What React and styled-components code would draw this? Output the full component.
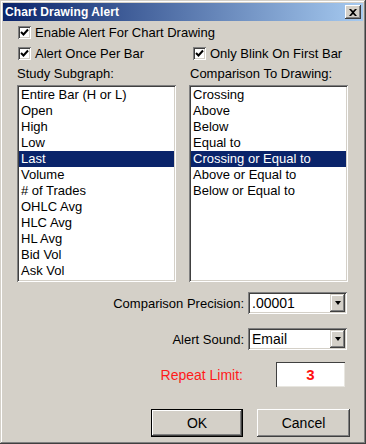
import React from 'react';
import styled, { createGlobalStyle } from 'styled-components';

const GlobalStyle = createGlobalStyle`
  html, body {
    margin: 0;
    padding: 0;
    background: #d4d0c8;
  }
  body {
    font-family: "Liberation Sans", Arial, sans-serif;
    font-size: 13px;
    color: #000;
  }
`;

const sunken = `
  box-shadow: inset 1px 1px #808080, inset -1px -1px #ffffff,
    inset 2px 2px #404040, inset -2px -2px #d4d0c8;
`;

const Window = styled.div`
  width: 366px;
  height: 444px;
  box-sizing: border-box;
  padding: 3px;
  background: #d4d0c8;
  box-shadow: inset -1px -1px #404040, inset 1px 1px #d4d0c8,
    inset -2px -2px #808080, inset 2px 2px #ffffff;
  display: flex;
  flex-direction: column;
`;

const TitleBar = styled.div`
  height: 18px;
  display: flex;
  align-items: center;
  justify-content: space-between;
  padding: 0 2px 0 2px;
  background: linear-gradient(to right, #0a246a, #a6caf0);
`;

const Title = styled.span`
  color: #fff;
  font-weight: bold;
  font-size: 12px;
  letter-spacing: 0.1px;
`;

const CloseButton = styled.div`
  width: 16px;
  height: 14px;
  background: #d4d0c8;
  box-shadow: inset -1px -1px #404040, inset 1px 1px #ffffff,
    inset -2px -2px #808080;
  display: flex;
  align-items: center;
  justify-content: center;
`;

const Body = styled.div`
  flex: 1;
  display: flex;
  flex-direction: column;
  padding: 5px 15px 0 14px;
`;

const CheckRow = styled.div`
  display: flex;
  height: 13px;
  margin-bottom: 8px;
`;

const CheckItem = styled.label`
  display: flex;
  align-items: center;
  gap: 4px;
  width: ${(p) => p.$width || 'auto'};
  padding-left: ${(p) => p.$indent || 1}px;
  white-space: nowrap;
  line-height: 13px;
`;

const Box = styled.span`
  width: 13px;
  height: 13px;
  flex: none;
  background: #fff;
  ${sunken}
  display: flex;
  align-items: center;
  justify-content: center;
`;

const Columns = styled.div`
  display: grid;
  grid-template-columns: 159px 159px;
  column-gap: 13px;
  margin-top: -2px;
`;

const Column = styled.div`
  display: flex;
  flex-direction: column;
`;

const ColLabel = styled.div`
  height: 19px;
  line-height: 16px;
  white-space: nowrap;
  padding-left: ${(p) => p.$indent || 0}px;
`;

const ListBox = styled.div`
  height: 197px;
  box-sizing: border-box;
  padding: 2px;
  background: #fff;
  ${sunken}
`;

const ListItem = styled.div`
  height: 16px;
  line-height: 16px;
  padding-left: 2px;
  background: ${(p) => (p.$selected ? '#0a246a' : 'transparent')};
  color: ${(p) => (p.$selected ? '#fff' : '#000')};
  white-space: nowrap;
`;

const FieldRow = styled.div`
  display: flex;
  justify-content: flex-end;
  align-items: center;
  gap: ${(p) => p.$gap || 4}px;
  margin-top: ${(p) => p.$top || 0}px;
  padding-right: ${(p) => p.$right || 0}px;
`;

const FieldLabel = styled.span`
  color: ${(p) => p.$color || '#000'};
  font-size: ${(p) => p.$size || 13}px;
`;

const Combo = styled.div`
  width: 99px;
  height: 22px;
  box-sizing: border-box;
  padding: 2px;
  background: #fff;
  ${sunken}
  display: flex;
  align-items: center;
`;

const ComboText = styled.span`
  flex: 1;
  padding-left: 2px;
  font-size: 14px;
`;

const ComboButton = styled.div`
  width: 15px;
  height: 18px;
  background: #d4d0c8;
  box-shadow: inset -1px -1px #404040, inset 1px 1px #d4d0c8,
    inset -2px -2px #808080, inset 2px 2px #ffffff;
  display: flex;
  align-items: center;
  justify-content: center;
`;

const Arrow = styled.span`
  width: 0;
  height: 0;
  border-left: 3.5px solid transparent;
  border-right: 3.5px solid transparent;
  border-top: 4px solid #000;
  margin-left: 1px;
`;

const NumberBox = styled.div`
  width: 69px;
  height: 25px;
  box-sizing: border-box;
  background: #fff;
  box-shadow: inset 1px 1px #404040, inset -1px -1px #e8e6e0;
  display: flex;
  align-items: center;
  justify-content: center;
  color: #ff1010;
  font-weight: bold;
  font-size: 15px;
`;

const ButtonRow = styled.div`
  display: flex;
  justify-content: flex-end;
  gap: 14px;
  margin-top: 22px;
  margin-right: -2px;
`;

const Button = styled.div`
  width: ${(p) => (p.$default ? 92 : 93)}px;
  height: 28px;
  box-sizing: border-box;
  display: flex;
  align-items: center;
  justify-content: center;
  font-size: 14px;
  background: #d4d0c8;
  box-shadow: ${(p) =>
    p.$default
      ? 'inset 0 0 0 1px #000, inset -2px -2px #404040, inset 2px 2px #ffffff, inset -3px -3px #808080'
      : 'inset -1px -1px #404040, inset 1px 1px #ffffff, inset -2px -2px #808080'};
`;

const Check = () => (
  <svg width="9" height="9" viewBox="0 0 9 9">
    <path d="M1 4 L3.5 6.5 L8 1.5" stroke="#000" strokeWidth="2" fill="none" />
  </svg>
);

const subgraphs = [
  'Entire Bar (H or L)',
  'Open',
  'High',
  'Low',
  'Last',
  'Volume',
  '# of Trades',
  'OHLC Avg',
  'HLC Avg',
  'HL Avg',
  'Bid Vol',
  'Ask Vol',
];

const comparisons = [
  'Crossing',
  'Above',
  'Below',
  'Equal to',
  'Crossing or Equal to',
  'Above or Equal to',
  'Below or Equal to',
];

export default function App() {
  return (
    <>
      <GlobalStyle />
      <Window>
        <TitleBar>
          <Title>Chart Drawing Alert</Title>
          <CloseButton>
            <svg width="8" height="7" viewBox="0 0 8 7">
              <path d="M0 0 L2 0 L4 2 L6 0 L8 0 L5 3.5 L8 7 L6 7 L4 5 L2 7 L0 7 L3 3.5 Z" fill="#000" />
            </svg>
          </CloseButton>
        </TitleBar>
        <Body>
          <CheckRow>
            <CheckItem>
              <Box>
                <Check />
              </Box>
              Enable Alert For Chart Drawing
            </CheckItem>
          </CheckRow>
          <CheckRow>
            <CheckItem $width="174px">
              <Box>
                <Check />
              </Box>
              Alert Once Per Bar
            </CheckItem>
            <CheckItem>
              <Box>
                <Check />
              </Box>
              Only Blink On First Bar
            </CheckItem>
          </CheckRow>
          <Columns>
            <Column>
              <ColLabel>Study Subgraph:</ColLabel>
              <ListBox>
                {subgraphs.map((s) => (
                  <ListItem key={s} $selected={s === 'Last'}>
                    {s}
                  </ListItem>
                ))}
              </ListBox>
            </Column>
            <Column>
              <ColLabel $indent={1}>Comparison To Drawing:</ColLabel>
              <ListBox>
                {comparisons.map((s) => (
                  <ListItem key={s} $selected={s === 'Crossing or Equal to'}>
                    {s}
                  </ListItem>
                ))}
              </ListBox>
            </Column>
          </Columns>
          <FieldRow $top={10} $right={1}>
            <FieldLabel>Comparison Precision:</FieldLabel>
            <Combo>
              <ComboText>.00001</ComboText>
              <ComboButton>
                <Arrow />
              </ComboButton>
            </Combo>
          </FieldRow>
          <FieldRow $top={14} $right={1}>
            <FieldLabel>Alert Sound:</FieldLabel>
            <Combo>
              <ComboText>Email</ComboText>
              <ComboButton>
                <Arrow />
              </ComboButton>
            </Combo>
          </FieldRow>
          <FieldRow $top={12} $right={3} $gap={33}>
            <FieldLabel $color="#ff1a1a" $size={14}>
              Repeat Limit:
            </FieldLabel>
            <NumberBox>3</NumberBox>
          </FieldRow>
          <ButtonRow>
            <Button $default>OK</Button>
            <Button>Cancel</Button>
          </ButtonRow>
        </Body>
      </Window>
    </>
  );
}
